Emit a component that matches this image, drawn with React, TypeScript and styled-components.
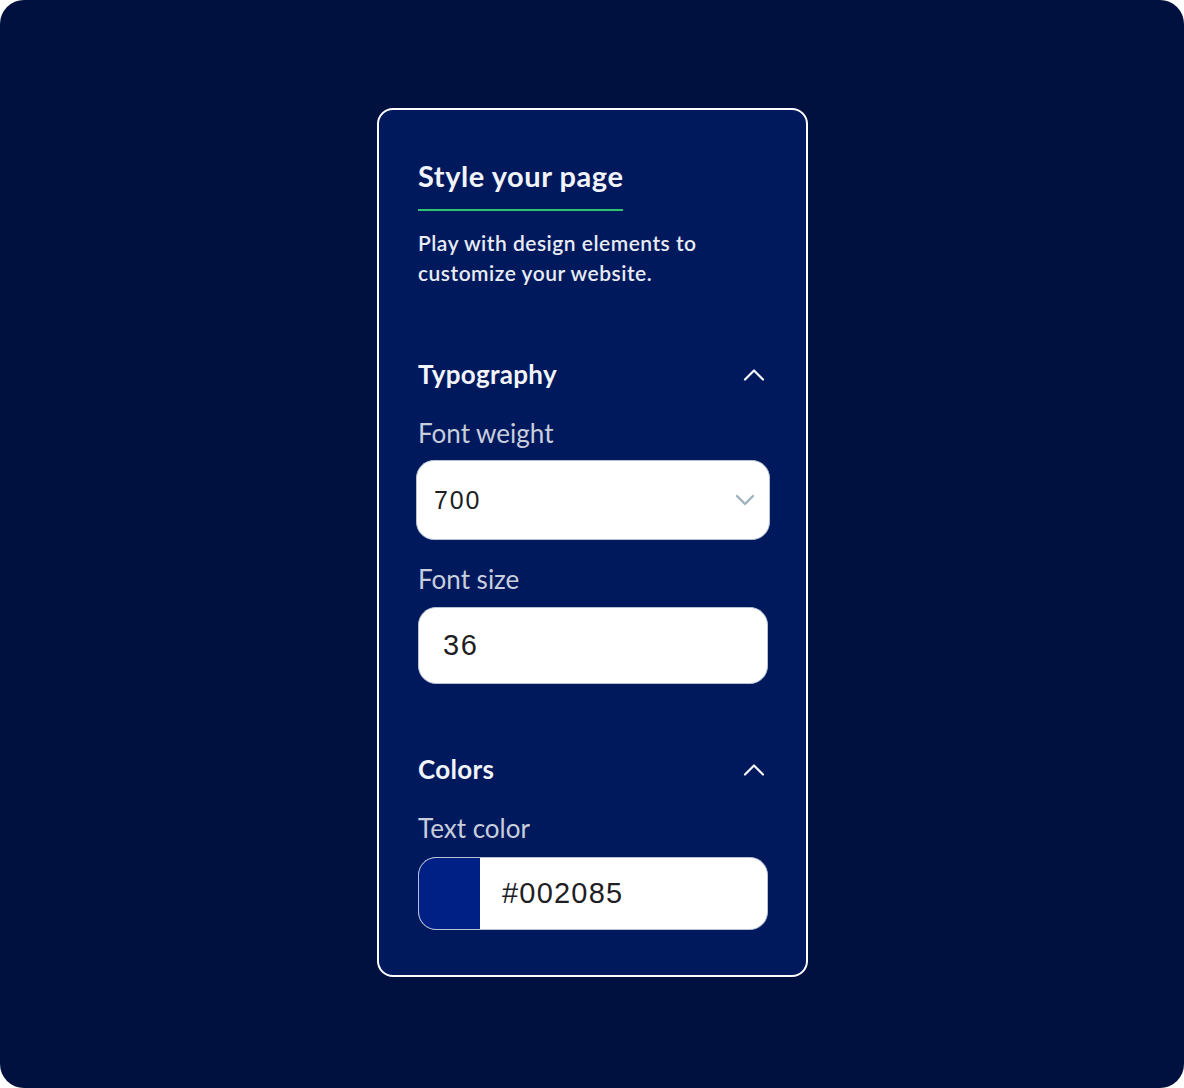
import styled, { createGlobalStyle } from "styled-components";

const GlobalStyle = createGlobalStyle`
  html, body {
    margin: 0;
    padding: 0;
    background: #ffffff;
  }
  * {
    box-sizing: border-box;
  }
`;

const Backdrop = styled.div`
  width: 1184px;
  height: 1088px;
  background: #00113f;
  border-radius: 24px;
  display: flex;
  justify-content: center;
  align-items: flex-start;
  padding-top: 108px;
  padding-left: 1px;
  font-family: Lato, "Noto Sans", sans-serif;
`;

const Panel = styled.section`
  width: 431px;
  height: 869px;
  background: #00195d;
  border: 2px solid #ffffff;
  border-radius: 16px;
  padding: 50px 38px 0 39px;
  display: flex;
  flex-direction: column;
  align-items: flex-start;
`;

const Title = styled.h1`
  margin: 0;
  font-size: 29px;
  line-height: 32px;
  font-weight: 700;
  color: #f2f4fa;
  padding-bottom: 17px;
  border-bottom: 2px solid #2fc46e;
  letter-spacing: 0.55px;
`;

const Description = styled.p`
  margin: 17px 0 0;
  font-size: 21px;
  line-height: 30px;
  font-weight: 600;
  color: #e8ebf4;
  letter-spacing: 0.5px;
`;

const SectionHeader = styled.div<{ $top: number }>`
  margin-top: ${(p) => p.$top}px;
  width: 100%;
  display: flex;
  align-items: center;
  justify-content: space-between;
  padding-right: 3px;
`;

const SectionTitle = styled.h2`
  margin: 0;
  font-size: 26px;
  line-height: 28px;
  font-weight: 700;
  color: #f2f4fa;
  letter-spacing: 0.3px;
`;

const Label = styled.label<{ $top: number }>`
  display: block;
  margin-top: ${(p) => p.$top}px;
  font-size: 26px;
  line-height: 28px;
  font-weight: 400;
  color: #c9cedd;
  letter-spacing: 0;
`;

const Control = styled.div<{ $top: number; $height: number }>`
  margin-top: ${(p) => p.$top}px;
  width: 350px;
  height: ${(p) => p.$height}px;
  background: #ffffff;
  border: 1px solid #b9c2d4;
  border-radius: 18px;
  display: flex;
  align-items: center;
  overflow: hidden;
  font-family: "Liberation Sans", Arial, sans-serif;
  color: #1e1e24;
`;

const SelectBox = styled(Control)`
  width: 354px;
  margin-left: -2px;
  padding: 0 14px 0 17px;
  justify-content: space-between;
`;

const Value = styled.span<{ $indent: number; $size: number; $spacing: number }>`
  padding-left: ${(p) => p.$indent}px;
  font-size: ${(p) => p.$size}px;
  letter-spacing: ${(p) => p.$spacing}px;
`;

const Swatch = styled.div<{ $color: string }>`
  width: 61px;
  height: 100%;
  background: ${(p) => p.$color};
  flex-shrink: 0;
`;

const ChevronUp = () => (
  <svg width="22" height="13" viewBox="0 0 22 13" fill="none">
    <path
      d="M2 11.5 L11 2.5 L20 11.5"
      stroke="#f4f6fb"
      strokeWidth="2.2"
      strokeLinecap="round"
      strokeLinejoin="round"
    />
  </svg>
);

const ChevronDown = () => (
  <svg width="20" height="12" viewBox="0 0 20 12" fill="none">
    <path
      d="M2 2 L10 10 L18 2"
      stroke="#9db2bd"
      strokeWidth="2.4"
      strokeLinecap="round"
      strokeLinejoin="round"
    />
  </svg>
);

export default function App() {
  return (
    <>
      <GlobalStyle />
      <Backdrop>
        <Panel>
          <Title>Style your page</Title>
          <Description>
            Play with design elements to
            <br />
            customize your website.
          </Description>

          <SectionHeader $top={72}>
            <SectionTitle>Typography</SectionTitle>
            <ChevronUp />
          </SectionHeader>
          <Label $top={31}>Font weight</Label>
          <SelectBox $top={13} $height={80}>
            <Value $indent={0} $size={25} $spacing={1.8}>
              700
            </Value>
            <ChevronDown />
          </SelectBox>
          <Label $top={25}>Font size</Label>
          <Control $top={14} $height={77}>
            <Value $indent={24} $size={29} $spacing={1.5}>
              36
            </Value>
          </Control>

          <SectionHeader $top={71}>
            <SectionTitle>Colors</SectionTitle>
            <ChevronUp />
          </SectionHeader>
          <Label $top={31}>Text color</Label>
          <Control $top={15} $height={73}>
            <Swatch $color="#002085" />
            <Value $indent={22} $size={29} $spacing={1.2}>
              #002085
            </Value>
          </Control>
        </Panel>
      </Backdrop>
    </>
  );
}
